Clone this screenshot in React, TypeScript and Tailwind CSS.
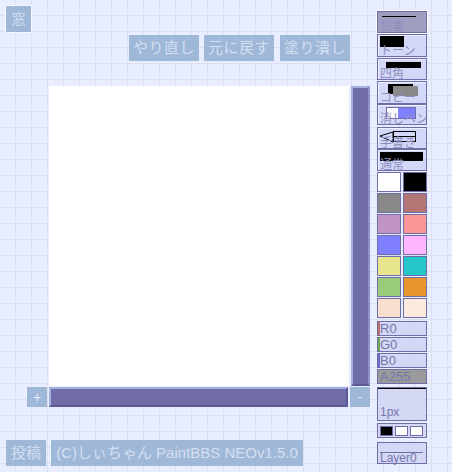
import React from 'react';

const font = "font-['Liberation_Sans','Noto_Sans_CJK_JP',sans-serif]";

const ToolButton = ({ label, active, mt = 'mt-px', h = 'h-[22px]', children }: { label: string; active?: boolean; mt?: string; h?: string; children?: React.ReactNode }) => (
    <div className={`relative w-[50px] overflow-hidden border border-[#6f6ea8] ${h} ${mt} ${active ? 'bg-[#9e9ec0] outline outline-1 outline-white' : 'bg-[#d4d8f8] shadow-[inset_1px_1px_0_#eef0ff]'}`}>
        {children}
        <span className="absolute bottom-[-2px] left-[2px] text-[12px] leading-[14px] whitespace-nowrap text-[#8f8fbf]">{label}</span>
    </div>
);

const swatches = [
    ['#ffffff', '#000000'],
    ['#888888', '#b47575'],
    ['#c095c5', '#fa9696'],
    ['#8080ff', '#ffb6ff'],
    ['#e7e58d', '#25c7c9'],
    ['#99cb7b', '#e7962d'],
    ['#f9ddcf', '#fceade'],
];

const Slider = ({ label, color, full }: { label: string; color: string; full?: boolean }) => (
    <div className={`relative h-[15px] w-[50px] mb-px border border-[#6f6ea8] overflow-hidden ${full ? 'bg-[#9a9a9a]' : 'bg-[#d4d8f4]'}`}>
        <div className="absolute left-0 top-0 h-full w-[2px]" style={{ backgroundColor: color }} />
        <span className="absolute left-[2px] top-[-1px] text-[13px] leading-[15px] text-[#7676ac]">{label}</span>
    </div>
);

export default function App() {
    return (
        <div className={`${font} flex h-[472px] w-[452px] overflow-hidden bg-[#e8eeff] bg-[linear-gradient(#dcdfef_1px,transparent_1px),linear-gradient(90deg,#dcdfef_1px,transparent_1px)] bg-[size:16px_16px] bg-[position:15px_15px]`}>
            {/* main column */}
            <div className="flex w-[377px] shrink-0 flex-col">
                <div className="ml-[5px] mt-[5px] flex h-[28px] w-[27px] items-center justify-center border border-[#f4f7ff] bg-[#a0b8d8] text-[14px] text-[#d4dff0]">窓</div>
                <div className="ml-[129px] mt-[2px] flex h-[26px] gap-[5px] text-[15px] tracking-[0.5px]">
                    <div className="flex w-[70px] items-center justify-center bg-[#a0b8d8] text-[#d4dff0]">やり直し</div>
                    <div className="flex w-[70px] items-center justify-center bg-[#a0b8d8] text-[#d4dff0]">元に戻す</div>
                    <div className="ml-px flex w-[70px] items-center justify-center bg-[#a0b8d8] text-[#d4dff0]">塗り潰し</div>
                </div>
                <div className="ml-[49px] mt-[25px] flex h-[300px] gap-[2px]">
                    <div className="h-[300px] w-[300px] bg-white" />
                    <div className="h-[300px] w-[19px] border-2 border-[#a4b0e0] border-b-[#5c5a94] border-r-[#8c90cc] bg-[#6f6ca8]" />
                </div>
                <div className="ml-[27px] mt-px flex h-[20px] items-center">
                    <div className="flex h-[20px] w-[20px] items-center justify-center bg-[#a0b8d8] text-[14px] text-[#e8eeff]">+</div>
                    <div className="ml-[2px] h-[20px] w-[299px] border-2 border-[#a4b0e0] border-b-[#5c5a94] border-r-[#5c5a94] bg-[#6f6ca8]" />
                    <div className="ml-[2px] flex h-[20px] w-[20px] items-center justify-center bg-[#a0b8d8] text-[13px] text-[#e8eeff]">-</div>
                </div>
                <div className="ml-[6px] mt-[33px] flex h-[26px] gap-[5px] text-[15px]">
                    <div className="flex w-[40px] items-center justify-center bg-[#a0b8d8] text-[#d4dff0]">投稿</div>
                    <div className="flex w-[252px] items-center justify-center whitespace-nowrap bg-[#a0b8d8] text-[#d4dff0]">(C)しぃちゃん PaintBBS NEOv1.5.0</div>
                </div>
            </div>

            {/* tool panel */}
            <div className="flex w-[50px] shrink-0 flex-col pt-[11px]">
                <ToolButton label="鉛筆" active mt="mt-0">
                    <div className="absolute left-[4px] top-[4px] h-px w-[34px] bg-black" />
                </ToolButton>
                <ToolButton label="トーン" mt="mt-[1px]" h="h-[23px]">
                    <div className="absolute left-[2px] top-[1px] h-[11px] w-[24px] bg-black" />
                </ToolButton>
                <ToolButton label="四角" h="h-[22px]">
                    <div className="absolute left-[8px] top-[3px] h-[6px] w-[35px] bg-black" />
                </ToolButton>
                <ToolButton label="コピー" h="h-[23px]">
                    <div className="absolute left-[10px] top-[2px] h-[10px] w-[25px] bg-black" />
                    <div className="absolute left-[15px] top-[4px] h-[10px] w-[25px] bg-[#888888]" />
                </ToolButton>
                <ToolButton label="消しペン" h="h-[21px]" mt="mt-0">
                    <div className="absolute left-[8px] top-[2px] h-[12px] w-[12px] bg-white" />
                    <div className="absolute left-[20px] top-[2px] h-[12px] w-[18px] bg-[#8080ff]" />
                    <div className="absolute left-[8px] top-[2px] h-[12px] w-[30px] border border-[#6f6ea8]" />
                </ToolButton>
                <ToolButton label="手書き" mt="mt-[2px]" h="h-[22px]">
                    <svg className="absolute left-[1px] top-[1px]" width="44" height="16" viewBox="0 0 44 16">
                        <path d="M1 7 L14 3 L14 13 Z" fill="none" stroke="#000" />
                        <rect x="14.5" y="2.5" width="22" height="10" fill="none" stroke="#000" />
                        <path d="M15 7.5 H36" stroke="#000" />
                    </svg>
                </ToolButton>
                <ToolButton label="通常" mt="mt-0" h="h-[22px]">
                    <div className="absolute left-[2px] top-[2px] h-[9px] w-[43px] bg-black" />
                </ToolButton>

                <div className="mt-px flex flex-col">
                    {swatches.map(row => (
                        <div key={row[0]} className="flex h-[21px] justify-between">
                            {row.map(c => (
                                <div key={c} className="h-[20px] w-[24px] border border-[#6f6ea8]" style={{ backgroundColor: c }} />
                            ))}
                        </div>
                    ))}
                </div>

                <div className="mt-[2px]">
                    <Slider label="R0" color="#c06a6a" />
                    <Slider label="G0" color="#6aa84f" />
                    <Slider label="B0" color="#6a6ad0" />
                    <Slider label="A255" color="#9a9a9a" full />
                </div>

                <div className="relative mt-[2px] h-[34px] w-[50px] border border-[#6f6ea8] bg-[#d4d8f4]">
                    <div className="h-px w-full bg-black" />
                    <span className="absolute bottom-[1px] left-[2px] text-[12px] leading-[14px] text-[#7676ac]">1px</span>
                </div>

                <div className="mt-[2px] flex h-[15px] w-[50px] items-center gap-[2px] border border-[#6f6ea8] bg-[#d4d8f4] px-[2px]">
                    <div className="h-[10px] w-[13px] border border-[#6f6ea8] bg-black" />
                    <div className="h-[10px] w-[13px] border border-[#6f6ea8] bg-white" />
                    <div className="h-[10px] w-[13px] border border-[#6f6ea8] bg-white" />
                </div>

                <div className="relative mt-[4px] h-[22px] w-[50px] border border-[#6f6ea8] bg-[#d4d8f4]">
                    <div className="absolute left-[2px] top-[9px] h-px w-[43px] bg-[#6f6ea8]" />
                    <span className="absolute bottom-[-1px] left-[2px] text-[12px] leading-[12px] text-[#7676ac]">Layer0</span>
                </div>
            </div>
        </div>
    );
}
